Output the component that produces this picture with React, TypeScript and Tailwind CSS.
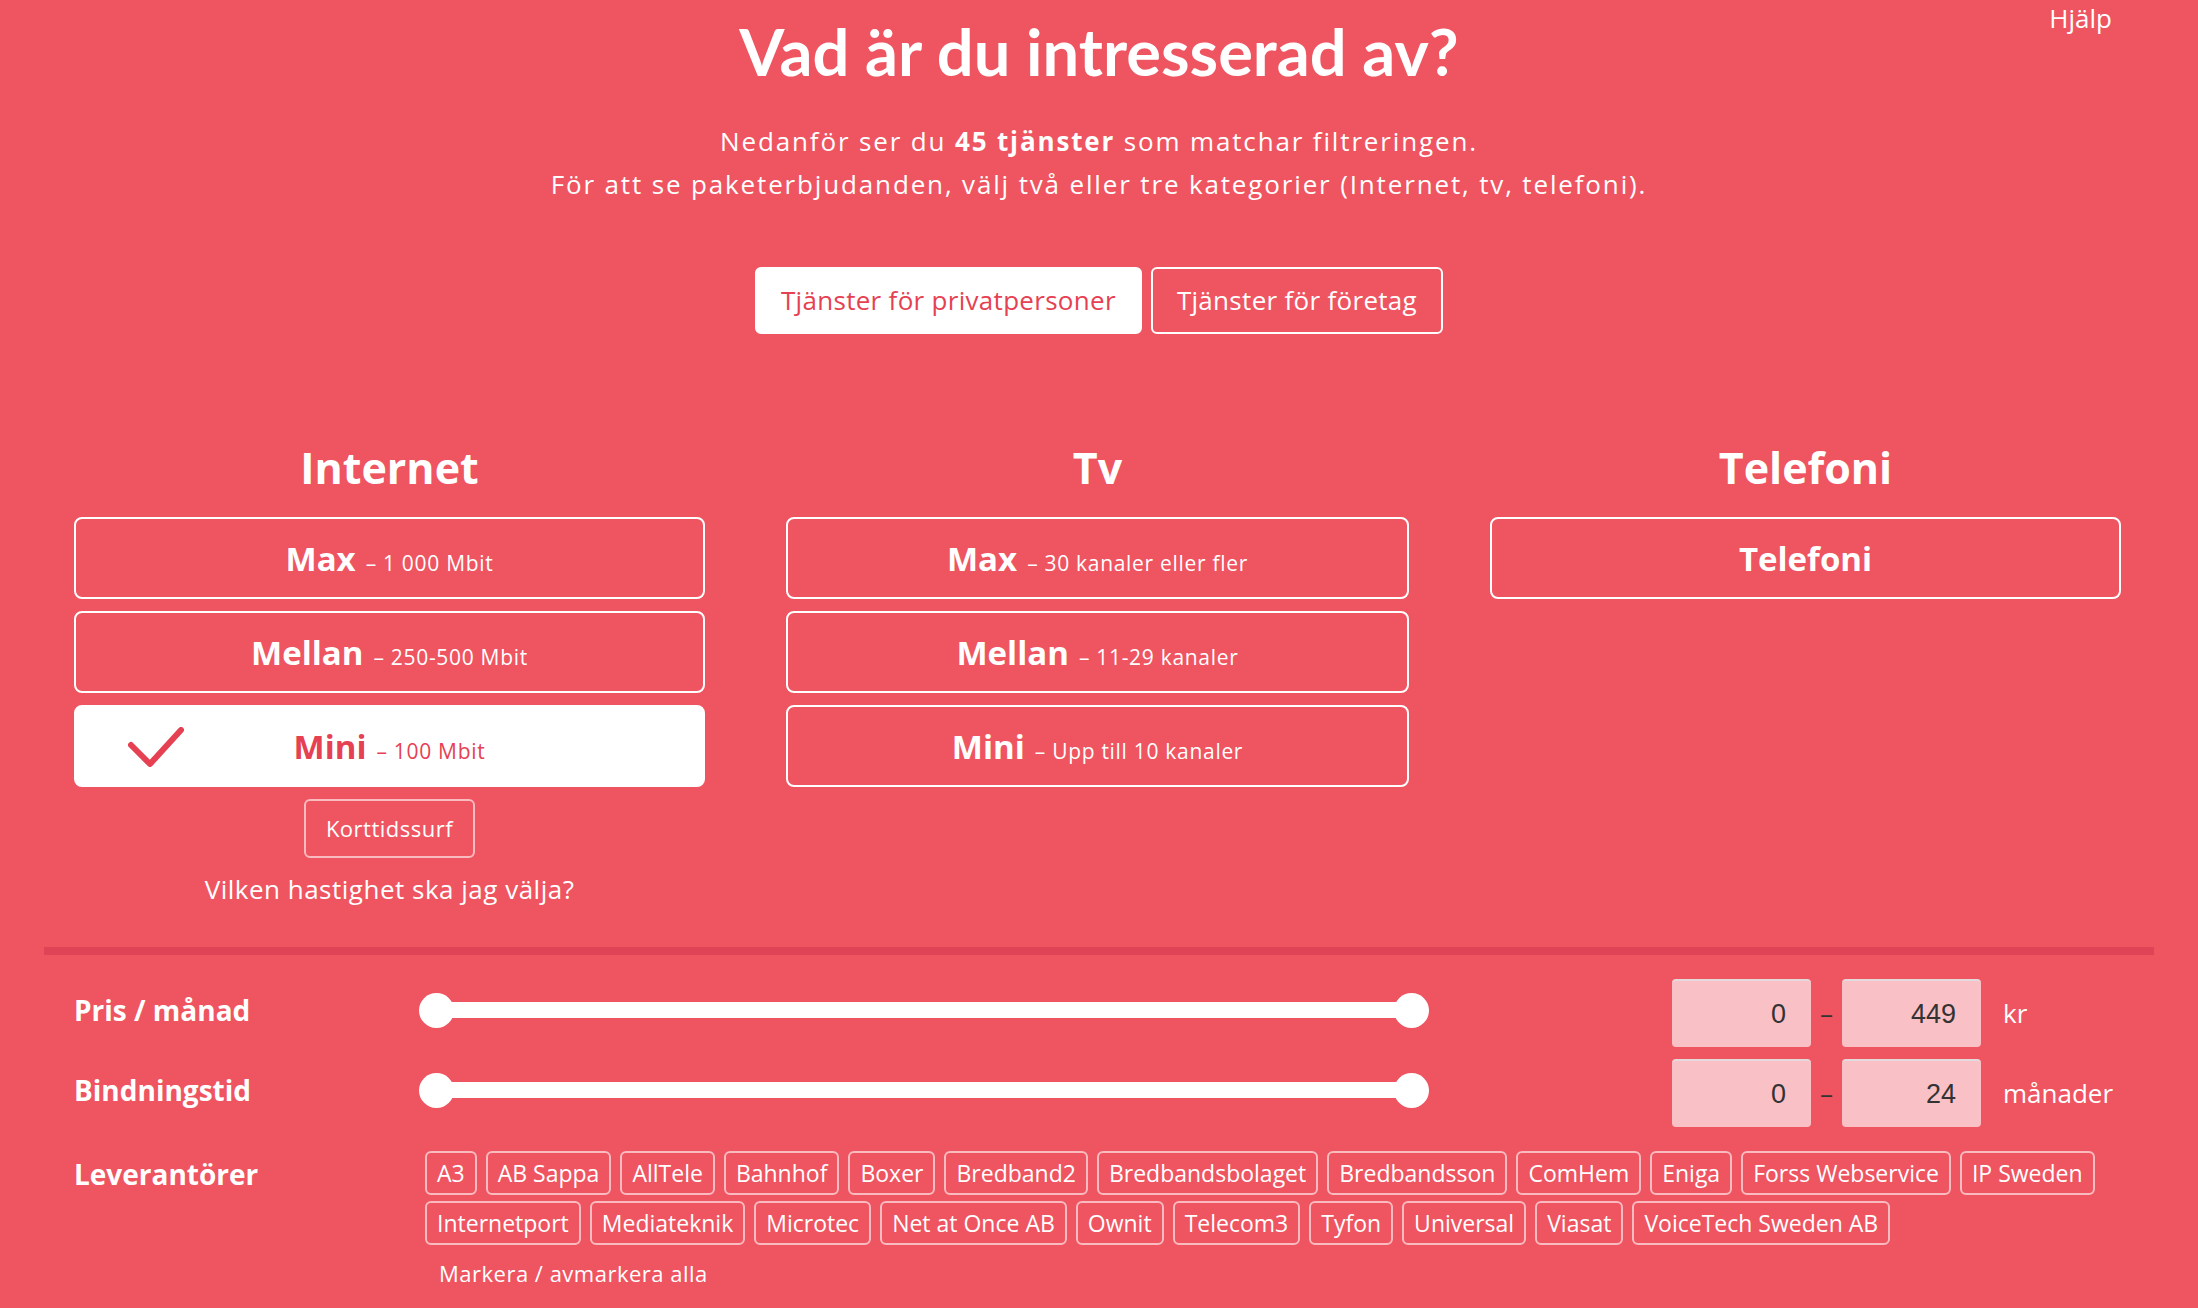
type Option = { name: string; detail?: string; selected?: boolean };

const INTERNET: Option[] = [
  { name: "Max", detail: "– 1 000 Mbit" },
  { name: "Mellan", detail: "– 250-500 Mbit" },
  { name: "Mini", detail: "– 100 Mbit", selected: true },
];

const TV: Option[] = [
  { name: "Max", detail: "– 30 kanaler eller fler" },
  { name: "Mellan", detail: "– 11-29 kanaler" },
  { name: "Mini", detail: "– Upp till 10 kanaler" },
];

const TELEFONI: Option[] = [{ name: "Telefoni" }];

const PROVIDERS = [
  "A3",
  "AB Sappa",
  "AllTele",
  "Bahnhof",
  "Boxer",
  "Bredband2",
  "Bredbandsbolaget",
  "Bredbandsson",
  "ComHem",
  "Eniga",
  "Forss Webservice",
  "IP Sweden",
  "Internetport",
  "Mediateknik",
  "Microtec",
  "Net at Once AB",
  "Ownit",
  "Telecom3",
  "Tyfon",
  "Universal",
  "Viasat",
  "VoiceTech Sweden AB",
];

function OptionBox({ option }: { option: Option }) {
  const sel = option.selected;
  return (
    <button
      className={
        "relative flex h-[82px] w-full items-center justify-center rounded-lg border-2 border-white " +
        (sel ? "bg-white text-[#e64152]" : "text-white")
      }
    >
      {sel && (
        <svg
          viewBox="0 0 56 40"
          className="absolute left-[52px] top-[20px] h-[40px] w-[56px]"
          fill="none"
          stroke="#e64152"
          strokeWidth="6"
          strokeLinecap="round"
          strokeLinejoin="round"
        >
          <path d="M3 18 L22 37 L53 3" />
        </svg>
      )}
      <span className="flex items-baseline gap-[10px]">
        <span className="text-[33px] font-bold leading-none">{option.name}</span>
        {option.detail && <span className="text-[21px] leading-none tracking-[0.7px]">{option.detail}</span>}
      </span>
    </button>
  );
}

function Column({ title, options, children }: { title: string; options: Option[]; children?: React.ReactNode }) {
  return (
    <div className="flex flex-col items-center">
      <h2 className="text-[43px] font-bold leading-none">{title}</h2>
      <div className="mt-[28px] flex w-full flex-col gap-[12px]">
        {options.map((o) => (
          <OptionBox key={o.name} option={o} />
        ))}
      </div>
      {children}
    </div>
  );
}

function RangeSlider() {
  return (
    <div className="relative mb-[6px] h-[35px] w-[1010px]">
      <div className="absolute left-[17px] right-[17px] top-[9px] h-[16px] bg-white" />
      <div className="absolute left-0 top-0 size-[35px] rounded-full bg-white" />
      <div className="absolute right-0 top-0 size-[35px] rounded-full bg-white" />
    </div>
  );
}

function NumberBox({ value }: { value: string }) {
  return (
    <div className="flex h-[68px] w-[139px] items-center justify-end rounded-[4px] border-t-2 border-[#e3d9da] bg-[#f9c1c6] pr-[25px] font-['Liberation_Sans',sans-serif] text-[27px] text-[#333]">
      {value}
    </div>
  );
}

function RangeRow({ label, min, max, unit }: { label: string; min: string; max: string; unit: string }) {
  return (
    <div className="flex h-[68px] items-center">
      <div className="w-[345px] pb-[6px] text-[28px] font-bold">{label}</div>
      <RangeSlider />
      <div className="ml-[243px] flex items-center">
        <NumberBox value={min} />
        <span className="w-[31px] text-center text-[26px] text-[#333]">–</span>
        <NumberBox value={max} />
        <span className="ml-[22px] text-[26px]">{unit}</span>
      </div>
    </div>
  );
}

export default function App() {
  return (
    <div className="min-h-screen bg-[#ef5461] font-['Open_Sans',sans-serif] text-white">
      <header className="grid grid-cols-[1fr_auto_1fr]">
        <div />
        <h1 className="pt-[19px] font-['Lato',sans-serif] text-[65px] font-bold leading-none">
          Vad är du intresserad av?
        </h1>
        <div className="flex justify-end pr-[86px]">
          <a href="#" className="text-[26px] leading-[36px]">
            Hjälp
          </a>
        </div>
      </header>

      <p className="mt-[36px] text-center text-[26px] leading-[43px] tracking-[1.85px]">
        Nedanför ser du <b>45 tjänster</b> som matchar filtreringen.
        <br />
        För att se paketerbjudanden, välj två eller tre kategorier (Internet, tv, telefoni).
      </p>

      <div className="mt-[61px] flex justify-center gap-[9px]">
        <button className="h-[67px] rounded-md border-2 border-white bg-white px-6 text-[26px] tracking-[0.3px] text-[#e64152]">
          Tjänster för privatpersoner
        </button>
        <button className="h-[67px] rounded-md border-2 border-white px-6 text-[26px] tracking-[0.3px]">
          Tjänster för företag
        </button>
      </div>

      <div className="mx-[44px]">
        <div className="mt-[112px] grid grid-cols-[631px_623px_631px] gap-x-[81px] pl-[30px]">
          <Column title="Internet" options={INTERNET}>
            <button className="mt-[12px] h-[59px] rounded-md border-2 border-white/60 px-[20px] text-[22px] tracking-[0.5px]">
              Korttidssurf
            </button>
            <p className="mt-[13px] text-[26px] leading-[36px] tracking-[0.5px]">Vilken hastighet ska jag välja?</p>
          </Column>
          <Column title="Tv" options={TV} />
          <Column title="Telefoni" options={TELEFONI} />
        </div>

        <div className="mt-[40px] h-[8px] bg-[#de4456]" />

        <div className="mt-[24px] pl-[30px]">
          <RangeRow label="Pris / månad" min="0" max="449" unit="kr" />
          <div className="mt-[12px]">
            <RangeRow label="Bindningstid" min="0" max="24" unit="månader" />
          </div>

          <div className="mt-[24px] flex items-start">
            <div className="w-[351px] pt-[2px] text-[28px] font-bold">Leverantörer</div>
            <div className="flex-1">
              <div className="flex flex-wrap gap-x-[9px] gap-y-[6px]">
                {PROVIDERS.map((p) => (
                  <span
                    key={p}
                    className="flex h-[44px] items-center rounded-md border-2 border-white/60 px-[10px] text-[23px] leading-none"
                  >
                    {p}
                  </span>
                ))}
              </div>
              <a href="#" className="mt-[13px] block pl-[14px] text-[22px] leading-[30px] tracking-[0.5px]">
                Markera / avmarkera alla
              </a>
            </div>
          </div>
        </div>
      </div>
    </div>
  );
}
